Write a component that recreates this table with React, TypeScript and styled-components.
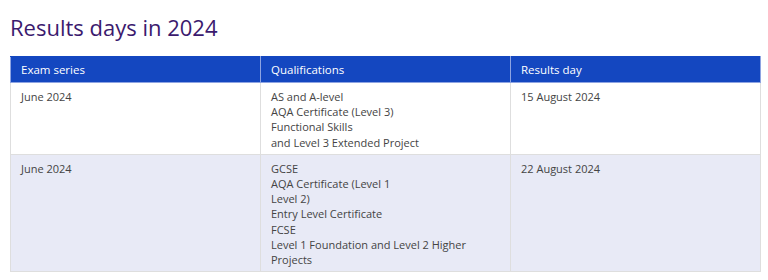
import React from 'react';
import styled, { createGlobalStyle } from 'styled-components';

interface ResultsRow {
  series: string;
  qualifications: string[];
  day: string;
}

const rows: ResultsRow[] = [
  {
    series: 'June 2024',
    qualifications: [
      'AS and A-level',
      'AQA Certificate (Level 3)',
      'Functional Skills',
      'and Level 3 Extended Project',
    ],
    day: '15 August 2024',
  },
  {
    series: 'June 2024',
    qualifications: [
      'GCSE',
      'AQA Certificate (Level 1',
      'Level 2)',
      'Entry Level Certificate',
      'FCSE',
      'Level 1 Foundation and Level 2 Higher',
      'Projects',
    ],
    day: '22 August 2024',
  },
];

const GlobalStyle = createGlobalStyle`
  body {
    margin: 0;
    background: #ffffff;
    font-family: "Open Sans", "Noto Sans", sans-serif;
  }
`;

const Page = styled.div`
  padding: 13px 10px 0 10px;
`;

const Title = styled.h2`
  margin: 0 0 15px 0;
  font-size: 22px;
  line-height: 28px;
  font-weight: 400;
  color: #3b1a6e;
`;

const Table = styled.table`
  width: 751px;
  border-collapse: collapse;
  table-layout: fixed;
  font-size: 11px;
  line-height: 15.2px;
`;

const HeadCell = styled.th`
  background: #1447c0;
  color: #ffffff;
  font-weight: 400;
  font-size: 11.5px;
  text-align: left;
  padding: 0 10px;
  height: 25px;
  border: 1px solid #8ea4e2;
  border-top-color: #1447c0;
`;

const Row = styled.tr<{ $shaded: boolean }>`
  background: ${(p) => (p.$shaded ? '#e8eaf6' : '#ffffff')};
`;

const Cell = styled.td`
  vertical-align: top;
  color: #444444;
  padding: 6px 10px 4px 10px;
  border: 1px solid #dedede;
`;

export default function App() {
  return (
    <>
      <GlobalStyle />
      <Page>
        <Title>Results days in 2024</Title>
        <Table>
          <thead>
            <tr>
              <HeadCell>Exam series</HeadCell>
              <HeadCell>Qualifications</HeadCell>
              <HeadCell>Results day</HeadCell>
            </tr>
          </thead>
          <tbody>
            {rows.map((row, i) => (
              <Row key={i} $shaded={i % 2 === 1}>
                <Cell>{row.series}</Cell>
                <Cell>
                  {row.qualifications.map((q, j) => (
                    <div key={j}>{q}</div>
                  ))}
                </Cell>
                <Cell>{row.day}</Cell>
              </Row>
            ))}
          </tbody>
        </Table>
      </Page>
    </>
  );
}
